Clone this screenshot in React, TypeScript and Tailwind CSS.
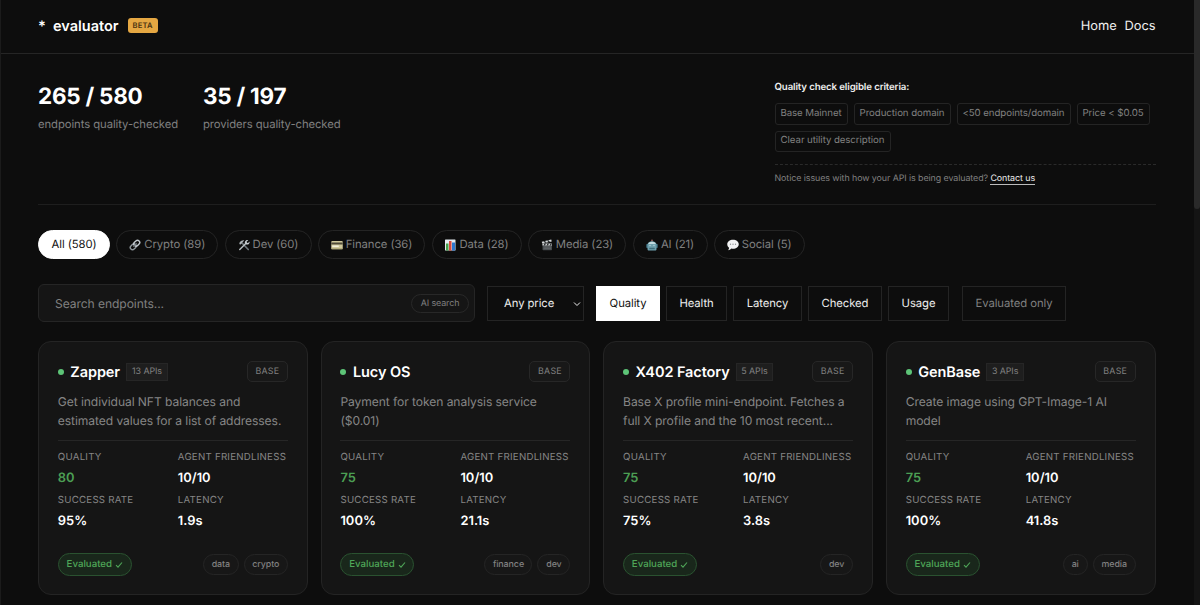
import type { ReactNode } from 'react';

interface Category {
  label: string;
  width: string;
  icon?: ReactNode;
}

interface Endpoint {
  name: string;
  apis?: { label: string; width: string };
  lines: [string, string];
  quality: string;
  friendliness: string;
  success: string;
  latency: string;
  tags: { label: string; width: string }[];
}

function LinkIcon() {
  return (
    <svg className="h-3 w-3" viewBox="0 0 24 24" fill="none" strokeLinecap="round">
      <g transform="rotate(-45 12 12)">
        <rect x="0.5" y="7.5" width="13" height="9" rx="4.5" stroke="#8f979d" strokeWidth="2.8" />
        <rect x="10.5" y="7.5" width="13" height="9" rx="4.5" stroke="#c3cacf" strokeWidth="2.8" />
        <path d="M8 12h8" stroke="#737b81" strokeWidth="2" />
      </g>
    </svg>
  );
}

function ToolsIcon() {
  return (
    <svg className="h-3 w-3" viewBox="0 0 24 24" fill="none" strokeLinecap="round">
      <path d="M9 9l11.5 12" stroke="#6c7479" strokeWidth="3.4" />
      <path d="M2.5 8.5C4 4 8 2 12.5 2.5L7 9.5l-3 2z" fill="#aab1b5" />
      <path d="M3.5 21L16 8.5" stroke="#b9c0c4" strokeWidth="3" />
      <path d="M20.8 2.2l-3.6 3.4.8 2 2 .6 3.2-3.4c.6 4-2.4 7-6.6 6.2-3-.8-3.8-4-2.2-6.6 1.4-2.2 4-3 6.4-2.2z" fill="#c6ccd0" />
    </svg>
  );
}

function CardIcon() {
  return (
    <svg className="h-3 w-3" viewBox="0 0 24 24">
      <rect x="0.5" y="4" width="23" height="16.5" rx="2" fill="#cfc99c" />
      <rect x="0.5" y="7" width="23" height="4" fill="#4e4a38" />
      <rect x="2.5" y="13" width="13" height="3" fill="#f2efdb" />
      <rect x="0.5" y="18.5" width="23" height="2" rx="1" fill="#a8a172" />
    </svg>
  );
}

function ChartIcon() {
  return (
    <svg className="h-3 w-3" viewBox="0 0 24 24">
      <rect x="2" y="1" width="21" height="22" rx="1" fill="#e4ebef" />
      <rect x="4" y="9" width="5" height="14" fill="#44a048" />
      <rect x="10" y="4" width="5" height="19" fill="#d8483c" />
      <rect x="16" y="7" width="6" height="16" fill="#2c78cf" />
    </svg>
  );
}

function ClapperIcon() {
  return (
    <svg className="h-3 w-3" viewBox="0 0 24 24">
      <rect x="3" y="9.5" width="19" height="13" rx="1.5" fill="#45494c" />
      <rect x="3" y="9" width="19" height="4" fill="#d5d8da" />
      <path d="M7 9l-2 4h3l2-4zM13 9l-2 4h3l2-4zM19 9l-2 4h3l2-4z" fill="#26292b" />
      <path d="M1.5 5.5L20.5 1l1 4L2.5 9.2z" fill="#d5d8da" />
      <path d="M5 4.7l3 3.2 3-.7-3-3.2zM12 3l3 3.3 3-.7-3-3.2z" fill="#26292b" />
      <path d="M5 16h15M5 19.5h15" stroke="#85898c" strokeWidth="1" />
    </svg>
  );
}

function RobotIcon() {
  return (
    <svg className="h-3 w-3" viewBox="0 0 24 24">
      <circle cx="12" cy="2.8" r="2" fill="#8a5a57" />
      <rect x="0.5" y="10" width="4" height="8" rx="1.5" fill="#3c6f80" />
      <rect x="19.5" y="10" width="4" height="8" rx="1.5" fill="#3c6f80" />
      <path d="M3 11c0-4 4-6.5 9-6.5s9 2.5 9 6.5v9c0 2-1 3-3 3H6c-2 0-3-1-3-3z" fill="#6fa0ad" />
      <path d="M4.5 10c1-3 4-4.3 7.5-4.3s6.5 1.3 7.5 4.3z" fill="#c3dbe0" />
      <circle cx="8" cy="13" r="1.6" fill="#a9cbd3" />
      <circle cx="16" cy="13" r="1.6" fill="#a9cbd3" />
      <rect x="6.5" y="17.5" width="11" height="3" rx="1" fill="#3d6c7a" />
    </svg>
  );
}

function SpeechIcon() {
  return (
    <svg className="h-3 w-3" viewBox="0 0 24 24">
      <path d="M12 1.5c6.5 0 11.5 3.7 11.5 9s-5 9-11.5 9c-1.3 0-2.5-.1-3.6-.4-1.5 2-3.8 3.3-6.2 3.4 1.3-1.4 2-3 1.9-4.9C1.8 15.9.5 13.4.5 10.5c0-5.3 5-9 11.5-9z" fill="#f1f2f3" />
      <circle cx="7" cy="10.5" r="1.3" fill="#8d9194" />
      <circle cx="12" cy="10.5" r="1.3" fill="#8d9194" />
      <circle cx="17" cy="10.5" r="1.3" fill="#8d9194" />
    </svg>
  );
}

const CATEGORIES: Category[] = [
  { label: 'All (580)', width: 'w-[72px]' },
  { label: 'Crypto (89)', width: 'w-[102px]', icon: <LinkIcon /> },
  { label: 'Dev (60)', width: 'w-[87px]', icon: <ToolsIcon /> },
  { label: 'Finance (36)', width: 'w-[107.5px]', icon: <CardIcon /> },
  { label: 'Data (28)', width: 'w-[90px]', icon: <ChartIcon /> },
  { label: 'Media (23)', width: 'w-[98.5px]', icon: <ClapperIcon /> },
  { label: 'AI (21)', width: 'w-[75px]', icon: <RobotIcon /> },
  { label: 'Social (5)', width: 'w-[91px]', icon: <SpeechIcon /> },
];

const CRITERIA = [
  { label: 'Base Mainnet', width: 'w-[73px]' },
  { label: 'Production domain', width: 'w-[97px]' },
  { label: '<50 endpoints/domain', width: 'w-[114px]' },
  { label: 'Price < $0.05', width: 'w-[73px]' },
  { label: 'Clear utility description', width: 'w-[116px]' },
];

const SORTS = [
  { label: 'Quality', width: 'w-16' },
  { label: 'Health', width: 'w-[61px]' },
  { label: 'Latency', width: 'w-[69px]' },
  { label: 'Checked', width: 'w-[74px]' },
  { label: 'Usage', width: 'w-[61px]' },
];

const ENDPOINTS: Endpoint[] = [
  {
    name: 'Zapper',
    apis: { label: '13 APIs', width: 'w-[42px]' },
    lines: ['Get individual NFT balances and', 'estimated values for a list of addresses.'],
    quality: '80',
    friendliness: '10/10',
    success: '95%',
    latency: '1.9s',
    tags: [
      { label: 'data', width: 'w-9' },
      { label: 'crypto', width: 'w-[44px]' },
    ],
  },
  {
    name: 'Lucy OS',
    lines: ['Payment for token analysis service', '($0.01)'],
    quality: '75',
    friendliness: '10/10',
    success: '100%',
    latency: '21.1s',
    tags: [
      { label: 'finance', width: 'w-12' },
      { label: 'dev', width: 'w-[33px]' },
    ],
  },
  {
    name: 'X402 Factory',
    apis: { label: '5 APIs', width: 'w-[37.5px]' },
    lines: ['Base X profile mini-endpoint. Fetches a', 'full X profile and the 10 most recent...'],
    quality: '75',
    friendliness: '10/10',
    success: '75%',
    latency: '3.8s',
    tags: [{ label: 'dev', width: 'w-[33px]' }],
  },
  {
    name: 'GenBase',
    apis: { label: '3 APIs', width: 'w-[37.5px]' },
    lines: ['Create image using GPT-Image-1 AI', 'model'],
    quality: '75',
    friendliness: '10/10',
    success: '100%',
    latency: '41.8s',
    tags: [
      { label: 'ai', width: 'w-[25px]' },
      { label: 'media', width: 'w-[43px]' },
    ],
  },
];

function Metric({ label, value, green }: { label: string; value: string; green?: boolean }) {
  return (
    <div className="h-[43px] whitespace-nowrap">
      <div className="h-[17px] text-[9.7px] leading-[18px] tracking-[0.24px] text-[#858585]">{label}</div>
      <div
        className={`mt-0.5 text-[12.9px] leading-[21px] font-semibold tracking-normal ${green ? 'text-[#4c9f54]' : 'text-white'}`}
      >
        {value}
      </div>
    </div>
  );
}

function EndpointCard({ endpoint }: { endpoint: Endpoint }) {
  return (
    <article className="h-[254px] rounded-[13px] border border-[#242424] bg-[#151515] px-[18.8px] pt-[19px]">
      <div className="flex h-[21px] items-center">
        <span className="h-1.5 w-1.5 rounded-full bg-[#5dc477]" />
        <h3 className="ml-[6.5px] pt-0.5 text-[14.5px] font-semibold whitespace-nowrap text-white">
          {endpoint.name}
        </h3>
        {endpoint.apis && (
          <span
            className={`ml-1.5 flex h-[18px] items-center justify-center border border-[#262626] bg-[#1e1e1e] pt-px text-[8.9px] whitespace-nowrap text-[#808080] ${endpoint.apis.width}`}
          >
            {endpoint.apis.label}
          </span>
        )}
        <span className="ml-auto flex h-[21px] w-[41px] items-center justify-center rounded-[5px] border border-[#272727] bg-[#181818] pt-px text-[8.9px] tracking-[0.2px] text-[#808080]">
          BASE
        </span>
      </div>
      <p className="mt-2.5 h-[38px] text-[12.1px] leading-[19px] whitespace-nowrap text-[#858585]">
        {endpoint.lines[0]}
        <br />
        {endpoint.lines[1]}
      </p>
      <div className="mt-2.5 grid grid-cols-[120px_1fr] border-t border-[#262626] pt-2">
        <Metric label="QUALITY" value={endpoint.quality} green />
        <Metric label="AGENT FRIENDLINESS" value={endpoint.friendliness} />
        <Metric label="SUCCESS RATE" value={endpoint.success} />
        <Metric label="LATENCY" value={endpoint.latency} />
      </div>
      <div className="mt-[18px] flex h-[23px] items-center gap-[5px]">
        <span className="mr-auto flex h-[23px] w-[74px] items-center justify-center gap-[3px] rounded-full border border-[#2a5230] bg-[#19271b] pt-px text-[9.7px] font-medium tracking-normal text-[#4fa658]">
          Evaluated
          <svg className="-mt-px h-2 w-2" viewBox="0 0 8 8" fill="none" stroke="currentColor" strokeWidth="1.1">
            <path d="M1 4.2L3 6.2L7 1.5" />
          </svg>
        </span>
        {endpoint.tags.map((tag) => (
          <span
            key={tag.label}
            className={`flex h-[21px] items-center justify-center rounded-full border border-[#252525] bg-[#171717] text-[8.9px] font-medium text-[#808080] ${tag.width}`}
          >
            {tag.label}
          </span>
        ))}
      </div>
    </article>
  );
}

export default function App() {
  return (
    <div className="flex h-[605px] w-[1200px] overflow-hidden border-l border-[#1b1b1b] bg-[#0d0d0d] font-[Inter,sans-serif] tracking-[-0.08px] text-white [text-rendering:geometricPrecision]">
      <div className="w-[1193px] shrink-0">
        <header className="flex h-[54px] items-center border-b border-[#252525] pr-[38.5px] pb-[3px] pl-[37px]">
          <span className="w-[15px] pt-[3px] text-[14.5px] font-semibold tracking-normal">*</span>
          <span className="pt-[3px] text-[14.5px] font-semibold tracking-normal">evaluator</span>
          <span className="ml-[9px] flex h-[15px] w-[30px] items-center justify-center rounded-[3px] bg-[#e5a742] pt-px text-[7.6px] font-semibold tracking-[0.2px] text-[#4b3311]">
            BETA
          </span>
          <nav className="ml-auto flex gap-2 pt-[3px] text-[12.9px] text-[#f0f0f0]">
            <a href="#home">Home</a>
            <a href="#docs">Docs</a>
          </nav>
        </header>

        <main className="pr-[38.5px] pl-[37px]">
          <section className="flex h-[151px] border-b border-[#1e1e1e] pt-[26px]">
            <div className="w-[165px]">
              <div className="h-8 text-[22.5px] leading-[34px] font-bold tracking-[-0.25px]">265 / 580</div>
              <div className="mt-1 text-[11.3px] leading-[17px] text-[#808080]">endpoints quality-checked</div>
            </div>
            <div>
              <div className="h-8 text-[22.5px] leading-[34px] font-bold tracking-[-0.25px]">35 / 197</div>
              <div className="mt-1 text-[11.3px] leading-[17px] text-[#808080]">providers quality-checked</div>
            </div>
            <aside className="ml-auto w-[381px]">
              <h2 className="pt-px text-[9.7px] leading-[13px] font-semibold tracking-[-0.14px] text-[#eeeeee]">
                Quality check eligible criteria:
              </h2>
              <div className="mt-[9px] flex flex-wrap gap-x-1.5 gap-y-1.5">
                {CRITERIA.map((item) => (
                  <span
                    key={item.label}
                    className={`flex h-[21.5px] items-center justify-center rounded-[3px] border border-[#242424] pt-px text-[9.7px] whitespace-nowrap text-[#808080] ${item.width}`}
                  >
                    {item.label}
                  </span>
                ))}
              </div>
              <p className="mt-3 border-t border-dashed border-[#2a2a2a] pt-[7px] text-[8.9px] leading-[13px] text-[#808080]">
                Notice issues with how your API is being evaluated?{' '}
                <a href="#contact" className="border-b border-[#bbbbbb] text-[#eeeeee]">
                  Contact us
                </a>
              </p>
            </aside>
          </section>

          <div className="mt-[25px] flex gap-[6.25px]">
            {CATEGORIES.map((category, i) => (
              <button
                key={category.label}
                className={`flex h-[29px] shrink-0 items-center justify-center gap-[3px] rounded-full border text-[11.3px] whitespace-nowrap [text-rendering:geometricPrecision] ${category.width} ${
                  i === 0 ? 'border-white bg-white text-[#111111]' : 'border-[#242424] text-[#808080]'
                }`}
              >
                {category.icon}
                {category.label}
              </button>
            ))}
          </div>

          <div className="mt-[25px] flex h-[38px] items-center">
            <div className="flex h-[38px] w-[437px] items-center rounded-md border border-[#252525] bg-[#151515] pr-[5px] pl-4">
              <span className="pt-0.5 text-[12.1px] text-[#808080]">Search endpoints...</span>
              <span className="ml-auto flex h-[19px] w-[58px] items-center justify-center rounded-full border border-[#282828] pt-px text-[8.9px] text-[#808080]">
                AI search
              </span>
            </div>
            <button className="ml-3 flex h-[35px] w-[97px] items-center border border-[#242424] pt-px pr-0.5 pl-4 text-[11.3px] text-[#eeeeee] [text-rendering:geometricPrecision]">
              Any price
              <svg className="ml-auto h-2 w-2" viewBox="0 0 8 8" fill="none" stroke="currentColor" strokeWidth="1">
                <path d="M1 2.5L4 5.5L7 2.5" />
              </svg>
            </button>
            <div className="ml-3 flex gap-1.5">
              {SORTS.map((sort, i) => (
                <button
                  key={sort.label}
                  className={`flex h-[35px] items-center justify-center border pt-px text-[11.3px] [text-rendering:geometricPrecision] ${sort.width} ${
                    i === 0 ? 'border-white bg-white text-[#111111]' : 'border-[#242424] text-[#eeeeee]'
                  }`}
                >
                  {sort.label}
                </button>
              ))}
            </div>
            <button className="ml-[13px] h-[35px] w-[104px] border border-[#242424] pt-px text-[11.3px] text-[#808080] [text-rendering:geometricPrecision]">
              Evaluated only
            </button>
          </div>

          <div className="mt-[19px] grid grid-cols-4 gap-[13px]">
            {ENDPOINTS.map((endpoint) => (
              <EndpointCard key={endpoint.name} endpoint={endpoint} />
            ))}
          </div>
        </main>
      </div>
      <div className="w-[7px] bg-[#141414]">
        <div className="h-[209px] rounded-b-[3px] bg-[#292929]" />
      </div>
    </div>
  );
}
